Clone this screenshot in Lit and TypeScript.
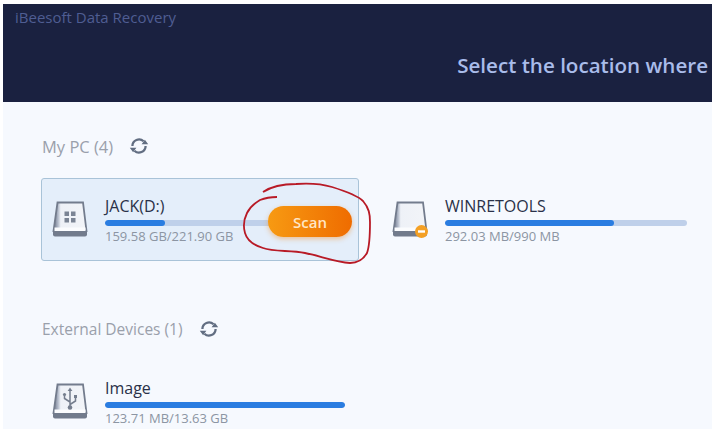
import { LitElement, html, css, svg } from 'lit';
import { customElement } from 'lit/decorators.js';

const refreshIcon = html`
  <svg class="refresh" viewBox="0 0 20 20" width="20" height="20">
    <path d="M3.4 10a6.6 6.6 0 0 1 11.2-4.7M16.6 10a6.6 6.6 0 0 1-11.2 4.7" fill="none" stroke="#626e82" stroke-width="2.3"/>
    <path d="M12.6 8.2h6.6l-3.3-4.4zM7.4 11.8H.8l3.3 4.4z" fill="#626e82"/>
  </svg>
`;

const driveBase = svg`
  <defs>
    <linearGradient id="side" x1="0" x2="1" y1="0" y2="0">
      <stop offset="0" stop-color="#687186"/>
      <stop offset="0.14" stop-color="#b4bccb"/>
      <stop offset="0.22" stop-color="#eef1f7"/>
      <stop offset="1" stop-color="#f2f4f8"/>
    </linearGradient>
  </defs>
  <path d="M5.5 1.5h25.5l3.5 28.5h-33z" fill="url(#side)" stroke="#737c8d" stroke-width="1.8"/>
  <path d="M1 30h34v3.5a2 2 0 0 1-2 2H3a2 2 0 0 1-2-2z" fill="#727b8c"/>
  <path d="M2.5 26.5h31v3.5h-31z" fill="#fbfcfe"/>
`;

const icons = {
  windows: html`
    <svg viewBox="0 0 36 37" width="36" height="37">
      ${driveBase}
      <path d="M12.5 10.5h4.5v4.5h-4.5zM19 10.5h4.5v4.5H19zM12.5 17h4.5v4.5h-4.5zM19 17h4.5v4.5H19z" fill="#7b8494"/>
    </svg>
  `,
  warning: html`
    <svg viewBox="0 0 36 37" width="36" height="37">
      ${driveBase}
      <circle cx="29.5" cy="30.5" r="6.5" fill="#f4a024"/>
      <path d="M26 29.3h7v2.4h-7z" fill="#fff"/>
    </svg>
  `,
  usb: html`
    <svg viewBox="0 0 36 37" width="36" height="37">
      ${driveBase}
      <path d="M18 6v18M18 19l-5.5-3.5v-3M18 21.5l5.5-3.5v-3" fill="none" stroke="#747d8d" stroke-width="1.5"/>
      <path d="M18 4.5l2.4 3.6h-4.8z" fill="#747d8d"/>
      <circle cx="18" cy="24.5" r="2.3" fill="#747d8d"/>
      <circle cx="12.5" cy="11.5" r="1.6" fill="#747d8d"/>
      <path d="M22 12h3v3h-3z" fill="#747d8d"/>
    </svg>
  `,
};

interface Drive {
  name: string;
  size: string;
  used: number;
  icon: keyof typeof icons;
  selected?: boolean;
}

const myPc: Drive[] = [
  { name: 'JACK(D:)', size: '159.58 GB/221.90 GB', used: 25, icon: 'windows', selected: true },
  { name: 'WINRETOOLS', size: '292.03 MB/990 MB', used: 70, icon: 'warning' },
];

const external: Drive[] = [
  { name: 'Image', size: '123.71 MB/13.63 GB', used: 100, icon: 'usb' },
];

@customElement('app-root')
export class AppRoot extends LitElement {
  static styles = css`
    :host {
      display: block;
      height: 429px;
      overflow: hidden;
      background: #fff;
      font-family: 'Open Sans', 'Noto Sans', sans-serif;
    }

    .window {
      margin: 4px 3px 0;
      height: 425px;
      overflow: hidden;
      display: flex;
      flex-direction: column;
      background: linear-gradient(#e7eefa, #f6f9fe 24px);
    }

    .header {
      flex: none;
      height: 98px;
      box-sizing: border-box;
      background: #1a2140;
      padding: 4px 4px 0 12px;
      display: flex;
      flex-direction: column;
    }

    .header__app {
      font-size: 15px;
      line-height: 18px;
      color: #4f5d92;
    }

    .header__title {
      margin-top: 24px;
      text-align: right;
      font-size: 20.6px;
      line-height: 30px;
      font-weight: 600;
      color: #a9bcea;
      white-space: nowrap;
    }

    .content {
      padding: 34px 0 0 38px;
    }

    .section__title {
      display: flex;
      align-items: center;
      gap: 16px;
      height: 20px;
      padding-left: 1px;
      font-size: 15.5px;
      color: #9aa0ab;
    }

    .section__title--pc {
      font-size: 16.5px;
    }

    .section__title--external {
      margin-top: 58px;
    }

    .refresh {
      display: block;
    }

    .drives {
      display: flex;
      gap: 22px;
      margin-top: 22px;
    }

    .drives--external {
      margin-top: 21px;
    }

    .drive {
      position: relative;
      flex: none;
      width: 318px;
      height: 83px;
      box-sizing: border-box;
      border: 1px solid transparent;
      border-radius: 3px;
      padding: 0 13px 0 10px;
      display: flex;
      align-items: center;
      gap: 17px;
    }

    .drive:nth-child(2) {
      width: 320px;
    }

    .drive--selected {
      background: #e4eefa;
      border-color: #a9c3d8;
    }

    .drive__info {
      flex: 1;
      min-width: 0;
      padding-top: 2px;
    }

    .drive__name {
      font-size: 16px;
      line-height: 20px;
      color: #2a3148;
    }

    .drive__bar {
      height: 6px;
      border-radius: 3px;
      background: #bfd0ea;
      margin-top: 4px;
      overflow: hidden;
    }

    .drive__used {
      height: 100%;
      border-radius: 3px;
      background: #2a7de1;
    }

    .drive__size {
      margin-top: 1px;
      font-size: 13px;
      line-height: 18px;
      color: #8c95a3;
      white-space: nowrap;
    }

    .scan {
      position: absolute;
      left: 226px;
      top: 27px;
      width: 84px;
      height: 31px;
      border: none;
      border-radius: 16px;
      background: linear-gradient(90deg, #f79a12, #ef6c00);
      box-shadow: 0 2px 5px rgba(240, 140, 40, 0.45);
      color: #ffe6c4;
      font: 600 15px 'Open Sans', sans-serif;
      padding: 0;
    }

    .circle {
      position: absolute;
      left: 230px;
      top: 180px;
      pointer-events: none;
    }
  `;

  renderDrive(d: Drive) {
    return html`
      <div class="drive ${d.selected ? 'drive--selected' : ''}">
        ${icons[d.icon]}
        <div class="drive__info">
          <div class="drive__name">${d.name}</div>
          <div class="drive__bar">
            <div class="drive__used" style="width: ${d.used}%"></div>
          </div>
          <div class="drive__size">${d.size}</div>
        </div>
        ${d.selected ? html`<button class="scan">Scan</button>` : ''}
      </div>
    `;
  }

  render() {
    return html`
      <div class="window">
        <div class="header">
          <div class="header__app">iBeesoft Data Recovery</div>
          <div class="header__title">Select the location where</div>
        </div>
        <div class="content">
          <div class="section__title section__title--pc">My PC (4) ${refreshIcon}</div>
          <div class="drives">${myPc.map((d) => this.renderDrive(d))}</div>
          <div class="section__title section__title--external">External Devices (1) ${refreshIcon}</div>
          <div class="drives drives--external">${external.map((d) => this.renderDrive(d))}</div>
        </div>
      </div>
      <svg class="circle" width="150" height="90" viewBox="230 180 150 90">
        <path d="M263 192C272 186 284 184 296 184C310 183 322 184 332 187C345 191 357 195 363 201C369 208 370 214 370 222C370 234 370 245 367 253C363 260 357 263 350 263C336 262 320 256 305 253C290 250 274 252 263 248C253 245 247 240 245 233C243 226 244 219 247 213C250 207 255 203 260 200C265 198 271 197 277 197"
          fill="none" stroke="#b81a26" stroke-width="1.8"/>
      </svg>
    `;
  }
}
